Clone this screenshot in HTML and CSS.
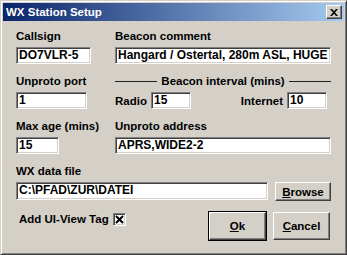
FILE: index.html
```html
<!DOCTYPE html>
<html lang="en">
<head>
  <meta charset="UTF-8">
  <title>WX Station Setup</title>
  <link rel="stylesheet" href="styles.css">
</head>
<body>
  <div class="window">
    <div class="title-bar">
      <span class="title">WX Station Setup</span>
      <button class="close-btn" aria-label="Close">
        <svg width="8" height="7" viewBox="0 0 8 7">
          <path d="M0 0h2l2 2.2L6 0h2L5 3.5 8 7H6L4 4.8 2 7H0l3-3.5z" fill="#000"/>
        </svg>
      </button>
    </div>

    <div class="content">
      <div class="row">
        <div class="col-left">
          <div class="label">Callsign</div>
          <div class="field w-call">DO7VLR-5</div>
        </div>
        <div class="col-right">
          <div class="label">Beacon comment</div>
          <div class="field w-full">Hangard / Ostertal, 280m ASL, HUGE</div>
        </div>
      </div>

      <div class="row">
        <div class="col-left">
          <div class="label">Unproto port</div>
          <div class="field w-port">1</div>
        </div>
        <div class="col-right">
          <div class="label group-title">Beacon interval (mins)</div>
          <div class="interval">
            <div class="pair">
              <span class="label">Radio</span>
              <div class="field w-small">15</div>
            </div>
            <div class="pair">
              <span class="label">Internet</span>
              <div class="field w-small">10</div>
            </div>
          </div>
        </div>
      </div>

      <div class="row">
        <div class="col-left">
          <div class="label">Max age (mins)</div>
          <div class="field w-age">15</div>
        </div>
        <div class="col-right">
          <div class="label">Unproto address</div>
          <div class="field w-full">APRS,WIDE2-2</div>
        </div>
      </div>

      <div class="row">
        <div class="col-wide">
          <div class="label">WX data file</div>
          <div class="file-row">
            <div class="field w-file">C:\PFAD\ZUR\DATEI</div>
            <button class="btn browse"><u>B</u>rowse</button>
          </div>
        </div>
      </div>

      <div class="footer">
        <div class="check-wrap">
          <span class="label">Add UI-View Tag</span>
          <span class="checkbox">
            <svg width="9" height="9" viewBox="0 0 9 9">
              <path d="M1 1l7 7M8 1L1 8" stroke="#000" stroke-width="2"/>
            </svg>
          </span>
        </div>
        <div class="actions">
          <button class="btn default"><u>O</u>k</button>
          <button class="btn"><u>C</u>ancel</button>
        </div>
      </div>
    </div>
  </div>
</body>
</html>
```

FILE: styles.css
```css
/* Classic dialog look */
body {
  margin: 0;
  font-family: 'Liberation Sans', Arial, sans-serif;
  font-weight: bold;
  color: #000;
  background: #d4d0c8;
}

.window {
  width: 347px;
  height: 255px;
  box-sizing: border-box;
  padding: 2px;
  background: #d4d0c8;
  border: 1px solid;
  border-color: #d4d0c8 #404040 #404040 #d4d0c8;
  box-shadow: inset 1px 1px #fff, inset -1px -1px #808080;
}

.title-bar {
  height: 18px;
  display: flex;
  align-items: center;
  justify-content: space-between;
  padding: 0 2px 0 3px;
  background: linear-gradient(to right, #0a246a, #a6caf0);
}

.title {
  color: #fff;
  font-size: 11.5px;
  line-height: 13px;
}

.close-btn {
  width: 16px;
  height: 14px;
  padding: 0;
  display: flex;
  align-items: center;
  justify-content: center;
  background: #d4d0c8;
  border: 1px solid;
  border-color: #fff #404040 #404040 #fff;
  box-shadow: inset -1px -1px #808080;
}

.content {
  padding: 9px 13px 0 13px;
}

.row {
  display: flex;
  margin-bottom: 11px;
}

.col-left {
  width: 99px;
}

.col-right {
  flex: 1;
}

.col-wide {
  flex: 1;
}

.label {
  font-size: 11.5px;
  line-height: 13px;
  white-space: nowrap;
}

.row > div > .label {
  margin-bottom: 4px;
}

.field {
  height: 17px;
  box-sizing: border-box;
  padding: 0 2px;
  background: #fff;
  border: 1px solid;
  border-color: #808080 #fff #fff #808080;
  box-shadow: inset 1px 1px #404040, inset -1px -1px #d4d0c8;
  font-size: 12px;
  line-height: 14px;
  white-space: nowrap;
  overflow: hidden;
}

.w-call { width: 75px; }
.w-port { width: 71px; }
.w-age { width: 43px; }
.w-full { width: 216px; }
.w-small { width: 40px; }
.w-file { width: 252px; height: 18px; }

.group-title {
  display: flex;
  align-items: center;
  gap: 4px;
}

.group-title::before,
.group-title::after {
  content: "";
  flex: 1;
  height: 1px;
  background: #222;
}

.interval {
  display: flex;
  justify-content: space-between;
  padding-right: 4px;
}

.pair {
  display: flex;
  align-items: center;
  gap: 4px;
}

.pair .label {
  padding-top: 2px;
}

.file-row {
  display: flex;
  gap: 7px;
}

.btn {
  width: 57px;
  height: 28px;
  padding: 0;
  font-family: inherit;
  font-weight: bold;
  font-size: 11.5px;
  color: #000;
  background: #d4d0c8;
  border: 1px solid;
  border-color: #fff #404040 #404040 #fff;
  box-shadow: inset -1px -1px #808080, inset 1px 1px #d4d0c8;
}

.btn.browse {
  width: 56px;
  height: 19px;
}

.btn.default {
  outline: 1px solid #000;
  outline-offset: 0;
}

.footer {
  display: flex;
  justify-content: space-between;
  align-items: flex-start;
  margin-top: 3px;
}

.check-wrap {
  display: flex;
  align-items: center;
  gap: 4px;
  padding: 1px 0 0 3px;
}

.checkbox {
  width: 13px;
  height: 13px;
  box-sizing: border-box;
  display: flex;
  align-items: center;
  justify-content: center;
  background: #fff;
  border: 1px solid;
  border-color: #808080 #fff #fff #808080;
  box-shadow: inset 1px 1px #404040, inset -1px -1px #d4d0c8;
}

.actions {
  display: flex;
  gap: 7px;
  padding-right: 1px;
}
```
